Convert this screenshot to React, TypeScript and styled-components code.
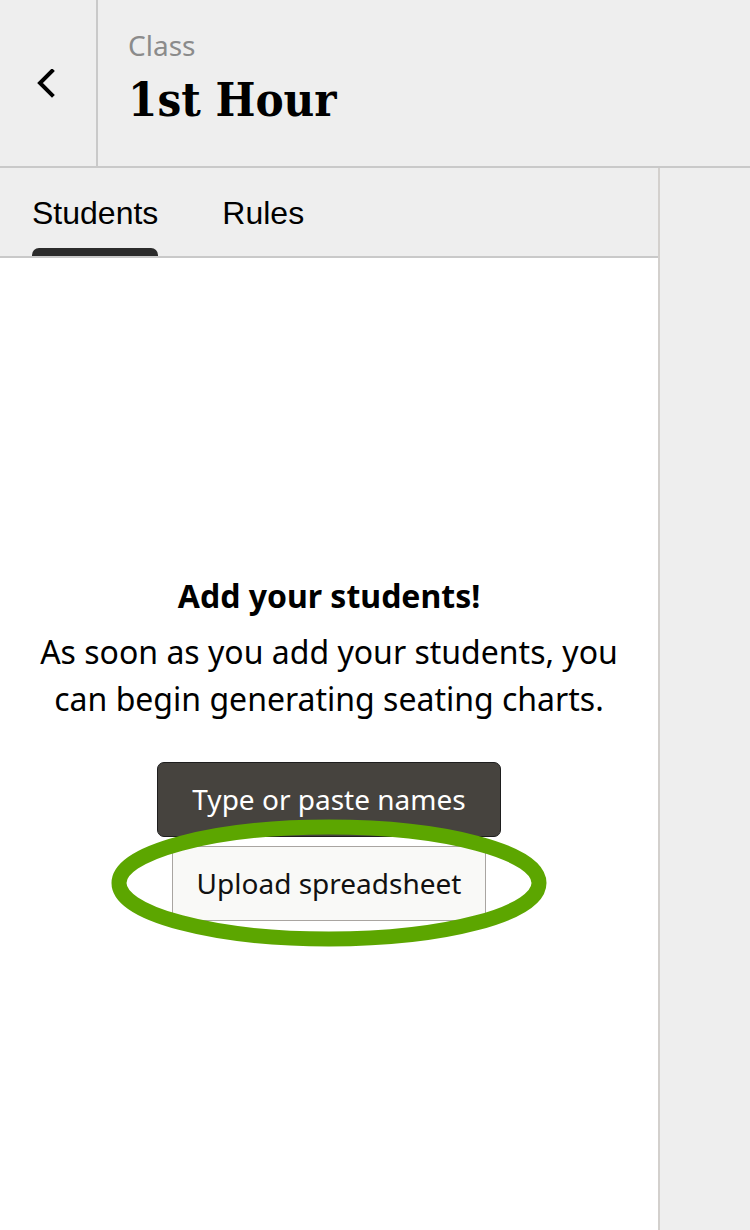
import React from "react";
import styled, { createGlobalStyle } from "styled-components";

const Global = createGlobalStyle`
  html, body { margin: 0; padding: 0; }
  body { background: #eeeeee; font-family: "Noto Sans", "Open Sans", sans-serif; }
  #root { min-height: 1230px; }
`;

const Page = styled.div`
  display: flex;
  flex-direction: column;
  height: 1230px;
  background: #eeeeee;
`;

const Header = styled.header`
  display: flex;
  height: 166px;
  border-bottom: 2px solid #c9c9c9;
  flex-shrink: 0;
`;

const BackCell = styled.button`
  width: 98px;
  border: none;
  border-right: 2px solid #c9c9c9;
  background: transparent;
  display: flex;
  align-items: flex-start;
  justify-content: flex-start;
  padding: 69px 0 0 37px;
  box-sizing: border-box;
  cursor: pointer;
`;

const TitleBlock = styled.div`
  display: flex;
  flex-direction: column;
  padding: 26px 0 0 30px;
`;

const Eyebrow = styled.div`
  font-family: "Noto Sans", sans-serif;
  font-size: 28px;
  line-height: 38px;
  color: #8b8b8b;
`;

const Title = styled.h1`
  margin: 8px 0 0;
  font-family: "DejaVu Serif Condensed", "DejaVu Serif", serif;
  font-stretch: condensed;
  font-weight: 700;
  font-size: 47px;
  line-height: 56px;
  color: #000;
`;

const Body = styled.div`
  display: flex;
  flex: 1;
  min-height: 0;
`;

const Panel = styled.section`
  width: 658px;
  border-right: 2px solid #d3d0cd;
  display: flex;
  flex-direction: column;
  background: #ffffff;
`;

const TabBar = styled.nav`
  display: flex;
  gap: 64px;
  height: 88px;
  padding-left: 32px;
  background: #eeeeee;
  border-bottom: 2px solid #c9c9c9;
`;

const Tab = styled.div<{ $active?: boolean }>`
  position: relative;
  font-family: "Liberation Sans", Arial, sans-serif;
  font-size: 32px;
  line-height: 88px;
  color: #000;
  height: 88px;
  span { display: block; margin-top: 1px; }
  &::after {
    content: "";
    display: ${(p) => (p.$active ? "block" : "none")};
    position: absolute;
    left: 0;
    right: 0;
    bottom: 0;
    height: 8px;
    background: #2b2b2b;
    border-radius: 7px 7px 0 0;
  }
`;

const Content = styled.div`
  flex: 1;
  display: flex;
  flex-direction: column;
  align-items: center;
  justify-content: center;
  padding-top: 8px;
  text-align: center;
`;

const Heading = styled.h2`
  margin: 0;
  font-family: "Noto Sans", sans-serif;
  font-weight: 700;
  font-size: 32px;
  line-height: 40px;
  color: #000;
`;

const Message = styled.p`
  margin: 12px 0 0;
  font-family: "Noto Sans", sans-serif;
  font-size: 32px;
  line-height: 47px;
  color: #000;
`;

const Actions = styled.div`
  display: flex;
  flex-direction: column;
  align-items: center;
  gap: 9px;
  margin-top: 40px;
`;

const PrimaryButton = styled.button`
  height: 75px;
  padding: 0 34px;
  background: #46433e;
  color: #ffffff;
  border: 1px solid #1e1e1e;
  border-radius: 7px;
  font-family: "Noto Sans", sans-serif;
  font-size: 28px;
  cursor: pointer;
`;

const HighlightWrap = styled.div`
  position: relative;
  display: flex;
  justify-content: center;
`;

const SecondaryButton = styled.button`
  height: 75px;
  padding: 0 24px;
  background: #f9f9f7;
  color: #111;
  border: 1px solid #a9a5a1;
  border-radius: 0;
  font-family: "Noto Sans", sans-serif;
  font-size: 28px;
  cursor: pointer;
`;

const Ring = styled.svg`
  position: absolute;
  left: 50%;
  top: 50%;
  width: 440px;
  height: 130px;
  transform: translate(-50%, -50%);
  pointer-events: none;
  overflow: visible;
`;

const Aside = styled.aside`
  flex: 1;
  background: #eeeeee;
`;

export default function App() {
  return (
    <>
      <Global />
      <Page>
        <Header>
          <BackCell aria-label="Back">
            <svg width="20" height="30" viewBox="0 0 20 30">
              <polyline
                points="15,2 3,14 15,26"
                fill="none"
                stroke="#000"
                strokeWidth="4"
                strokeLinecap="square"
                strokeLinejoin="miter"
              />
            </svg>
          </BackCell>
          <TitleBlock>
            <Eyebrow>Class</Eyebrow>
            <Title>1st Hour</Title>
          </TitleBlock>
        </Header>
        <Body>
          <Panel>
            <TabBar>
              <Tab $active>
                <span>Students</span>
              </Tab>
              <Tab>
                <span>Rules</span>
              </Tab>
            </TabBar>
            <Content>
              <Heading>Add your students!</Heading>
              <Message>
                As soon as you add your students, you
                <br />
                can begin generating seating charts.
              </Message>
              <Actions>
                <PrimaryButton>Type or paste names</PrimaryButton>
                <HighlightWrap>
                  <SecondaryButton>Upload spreadsheet</SecondaryButton>
                  <Ring viewBox="0 0 440 130">
                    <ellipse
                      cx="220"
                      cy="65"
                      rx="210"
                      ry="56"
                      fill="none"
                      stroke="#5ca600"
                      strokeWidth="15"
                    />
                  </Ring>
                </HighlightWrap>
              </Actions>
            </Content>
          </Panel>
          <Aside />
        </Body>
      </Page>
    </>
  );
}
